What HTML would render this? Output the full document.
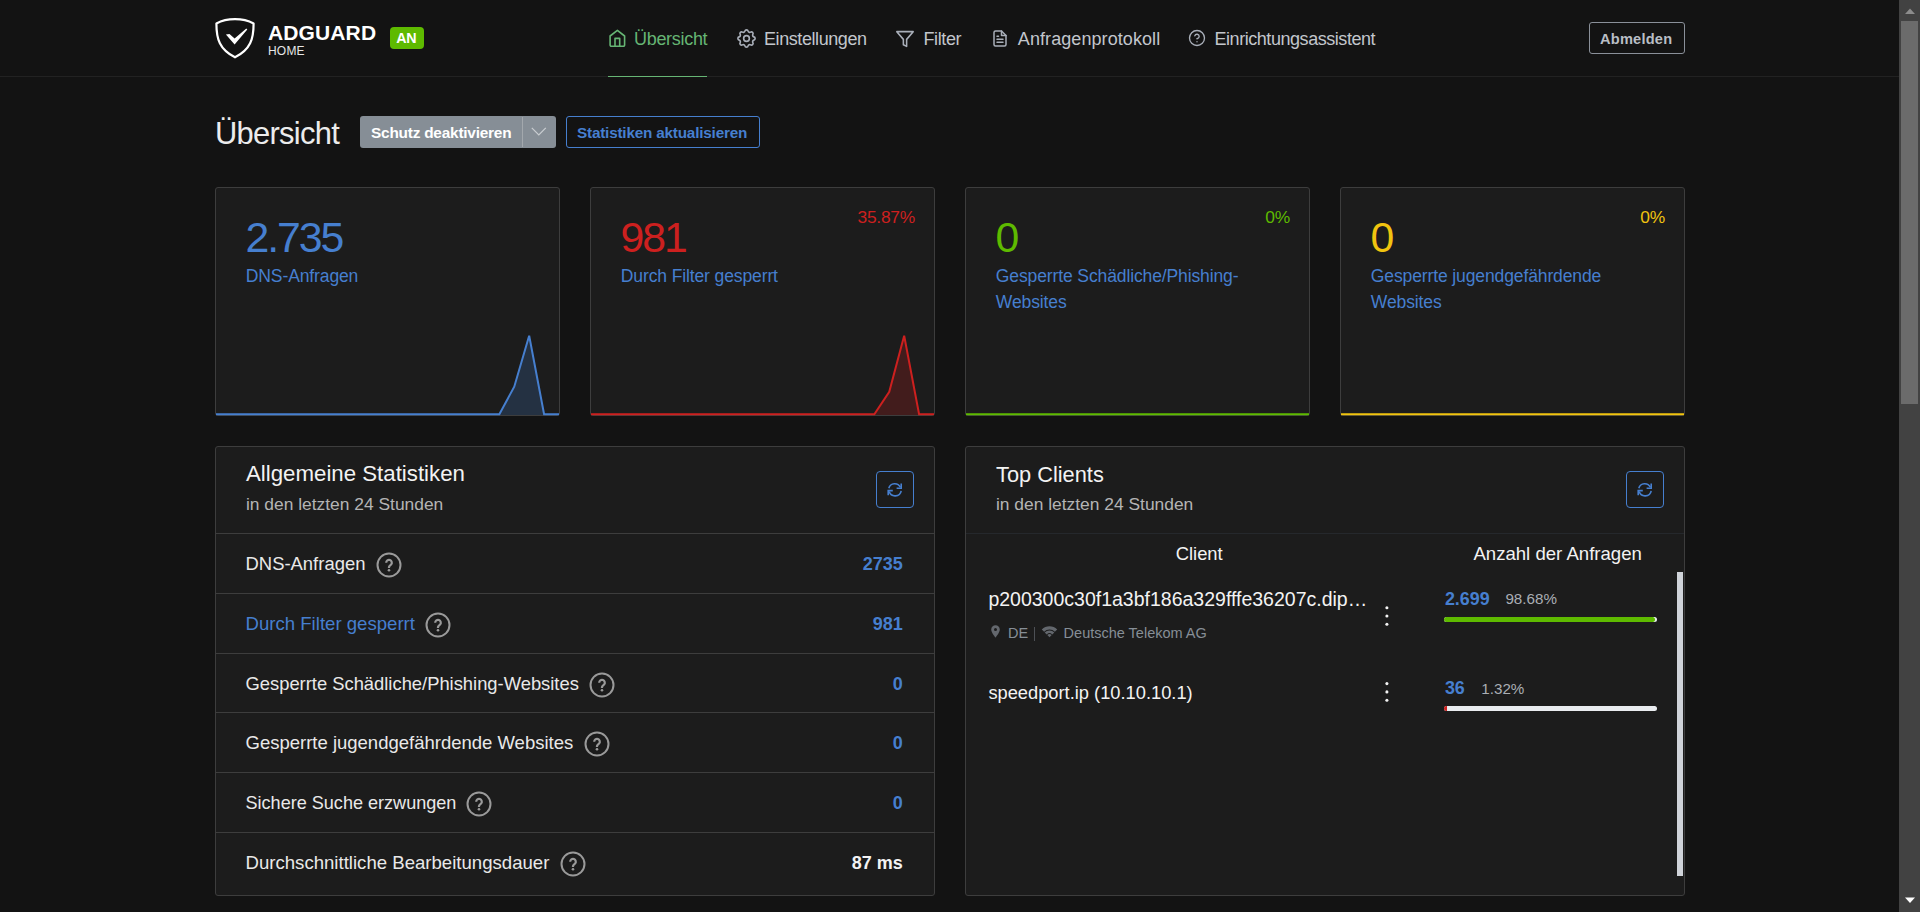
<!DOCTYPE html>
<html><head><meta charset="utf-8"><title>AdGuard Home</title>
<style>
html,body{margin:0;padding:0;width:1920px;height:912px;overflow:hidden;background:#131313;}
body{position:relative;font-family:"Liberation Sans",sans-serif;}
.t{position:absolute;white-space:nowrap;line-height:1;}
svg{display:block;overflow:visible}
</style></head><body>
<div style="position:absolute;left:0px;top:76px;width:1899px;height:1px;background:#222"></div>
<svg style="position:absolute;left:214px;top:17px;" width="42" height="42" viewBox="0 0 42 42" fill="none"><path d="M21 2.2C13.5 2.2 7 4 2.4 6.4C2.4 22 5.5 32.5 21 40.3C36.5 32.5 39.6 22 39.6 6.4C35 4 28.5 2.2 21 2.2Z" stroke="#fff" stroke-width="2.2" stroke-linejoin="round"/><path d="M11.9 17.4L15.5 17L20.6 21.6L32.3 11.4L33.3 12.4L20.6 27.4Z" fill="#fff"/></svg>
<div class="t" style="left:268px;top:21.62px;font-size:21px;color:#fff;font-weight:700;letter-spacing:0.12px;">ADGUARD</div>
<div class="t" style="left:268px;top:44.84px;font-size:12px;color:#e6e6e6;letter-spacing:0.2px;">HOME</div>
<div style="position:absolute;left:390px;top:27px;width:34px;height:22px;background:#5eba00;border-radius:4px"></div>
<div class="t" style="left:396.2px;top:31.30px;font-size:14.3px;color:#fff;font-weight:700;letter-spacing:-0.2px;">AN</div>
<svg style="position:absolute;left:604px;top:26px;" width="26" height="26" viewBox="0 0 26 26" fill="none"><g stroke="#66b574" stroke-width="1.6" stroke-linecap="round" stroke-linejoin="round"><path d="M6.1 10L13.4 4.4L20.6 10V19a1.2 1.2 0 0 1-1.2 1.2H7.3a1.2 1.2 0 0 1-1.2-1.2Z"/><path d="M11 20.2V12.4H15.7V20.2"/></g></svg>
<div class="t" style="left:634px;top:30.06px;font-size:18px;color:#66b574;letter-spacing:-0.3px;">Übersicht</div>
<div style="position:absolute;left:608px;top:76px;width:99px;height:1px;background:#66b574"></div>
<svg style="position:absolute;left:734.9px;top:26.8px;" width="23" height="23" viewBox="0 0 24 24" fill="none"><g stroke="#a9afb9" stroke-width="1.7" stroke-linecap="round" stroke-linejoin="round"><path d="M10.325 4.317c.426-1.756 2.924-1.756 3.35 0a1.724 1.724 0 0 0 2.573 1.066c1.543-.94 3.31.826 2.37 2.37a1.724 1.724 0 0 0 1.065 2.572c1.756.426 1.756 2.924 0 3.35a1.724 1.724 0 0 0-1.066 2.573c.94 1.543-.826 3.31-2.37 2.37a1.724 1.724 0 0 0-2.572 1.065c-.426 1.756-2.924 1.756-3.35 0a1.724 1.724 0 0 0-2.573-1.066c-1.543.94-3.31-.826-2.37-2.37a1.724 1.724 0 0 0-1.065-2.572c-1.756-.426-1.756-2.924 0-3.35a1.724 1.724 0 0 0 1.066-2.573c-.94-1.543.826-3.31 2.37-2.37c1 .608 2.296.07 2.572-1.065z"/><circle cx="12" cy="12" r="3"/></g></svg>
<div class="t" style="left:764px;top:30.06px;font-size:18px;color:#c2c6cc;letter-spacing:-0.42px;">Einstellungen</div>
<svg style="position:absolute;left:895px;top:29.7px;" width="20" height="18" viewBox="0 0 24 22" fill="none"><g stroke="#a9afb9" stroke-width="1.9" stroke-linecap="round" stroke-linejoin="round"><path d="M22 2H2l8 9.46V18l4 2v-8.54L22 2z"/></g></svg>
<div class="t" style="left:923.5px;top:30.06px;font-size:18px;color:#c2c6cc;letter-spacing:-0.4px;">Filter</div>
<svg style="position:absolute;left:991px;top:29px;" width="18" height="19" viewBox="0 0 24 24" fill="none"><g stroke="#a9afb9" stroke-width="2" stroke-linecap="round" stroke-linejoin="round"><path d="M14 2H6a2 2 0 0 0-2 2v16a2 2 0 0 0 2 2h12a2 2 0 0 0 2-2V8z"/><path d="M14 2v6h6"/><path d="M16 13H8M16 17H8M10 9H8"/></g></svg>
<div class="t" style="left:1017.8px;top:30.06px;font-size:18px;color:#c2c6cc;letter-spacing:0.08px;">Anfragenprotokoll</div>
<svg style="position:absolute;left:1188.2px;top:29.3px;" width="18" height="18" viewBox="0 0 24 24" fill="none"><g stroke="#a9afb9" stroke-width="1.8" stroke-linecap="round" stroke-linejoin="round"><circle cx="12" cy="12" r="10"/><path d="M9.09 9a3 3 0 0 1 5.83 1c0 2-3 3-3 3"/><path d="M12 17h.01"/></g></svg>
<div class="t" style="left:1214.5px;top:30.06px;font-size:18px;color:#c2c6cc;letter-spacing:-0.45px;">Einrichtungsassistent</div>
<div style="position:absolute;left:1589px;top:22px;width:96px;height:32px;box-sizing:border-box;border:1px solid #8a9099;border-radius:3px"></div>
<div class="t" style="left:1600px;top:31.64px;font-size:14.6px;color:#b9bec5;font-weight:700;letter-spacing:0.22px;">Abmelden</div>
<div class="t" style="left:215px;top:118.94px;font-size:30.9px;color:#ececec;letter-spacing:-0.72px;">Übersicht</div>
<div style="position:absolute;left:360px;top:116px;width:196px;height:32px;background:#868e96;border-radius:3px"></div>
<div style="position:absolute;left:522px;top:117px;width:1px;height:30px;background:#a3a8ad"></div>
<div class="t" style="left:371px;top:125.16px;font-size:15.4px;color:#fff;font-weight:700;letter-spacing:-0.22px;">Schutz deaktivieren</div>
<svg style="position:absolute;left:531px;top:127px;" width="16" height="9" viewBox="0 0 16 9" fill="none"><path d="M0.8 0.8L7.8 8L14.8 0.8" stroke="#c9cdd1" stroke-width="1.2"/></svg>
<div style="position:absolute;left:566px;top:116px;width:194px;height:32px;box-sizing:border-box;border:1.5px solid #467fcf;border-radius:3px"></div>
<div class="t" style="left:577px;top:125.25px;font-size:15.3px;color:#467fcf;font-weight:700;letter-spacing:-0.2px;">Statistiken aktualisieren</div>
<div style="position:absolute;left:215px;top:187px;width:345px;height:229px;box-sizing:border-box;background:#1c1c1c;border:1px solid #3d3d3d;border-radius:3px"></div>
<div class="t" style="left:245.5px;top:215.67px;font-size:42.8px;color:#467fcf;letter-spacing:-2.1px;">2.735</div>
<div class="t" style="left:245.8px;top:267.84px;font-size:17.55px;color:#467fcf;letter-spacing:-0.13px;">DNS-Anfragen</div>
<svg style="position:absolute;left:216px;top:187px;" width="343" height="229" viewBox="0 0 343 229" fill="none"><path d="M0.00,227.20 L14.91,227.20 L29.83,227.20 L44.74,227.20 L59.65,227.20 L74.57,227.20 L89.48,227.20 L104.39,227.20 L119.30,227.20 L134.22,227.20 L149.13,227.20 L164.04,227.20 L178.96,227.20 L193.87,227.20 L208.78,227.20 L223.70,227.20 L238.61,227.20 L253.52,227.20 L268.43,227.20 L283.35,227.20 L298.26,199.72 L313.17,148.70 L328.09,227.20 L343.00,227.20 L343,228 L0,228 Z" fill="rgba(70,127,207,0.22)"/><path d="M0.00,227.20 L14.91,227.20 L29.83,227.20 L44.74,227.20 L59.65,227.20 L74.57,227.20 L89.48,227.20 L104.39,227.20 L119.30,227.20 L134.22,227.20 L149.13,227.20 L164.04,227.20 L178.96,227.20 L193.87,227.20 L208.78,227.20 L223.70,227.20 L238.61,227.20 L253.52,227.20 L268.43,227.20 L283.35,227.20 L298.26,199.72 L313.17,148.70 L328.09,227.20 L343.00,227.20" stroke="#467fcf" stroke-width="2" stroke-linejoin="miter"/></svg>
<div style="position:absolute;left:590px;top:187px;width:345px;height:229px;box-sizing:border-box;background:#1c1c1c;border:1px solid #3d3d3d;border-radius:3px"></div>
<div class="t" style="left:620.5px;top:215.67px;font-size:42.8px;color:#cd201f;letter-spacing:-2.1px;">981</div>
<div class="t" style="left:620.8px;top:267.84px;font-size:17.55px;color:#467fcf;letter-spacing:-0.13px;">Durch Filter gesperrt</div>
<div class="t" style="right:1005px;top:208.87px;font-size:17.4px;color:#cd201f;letter-spacing:-0.25px;">35.87%</div>
<svg style="position:absolute;left:591px;top:187px;" width="343" height="229" viewBox="0 0 343 229" fill="none"><path d="M0.00,227.20 L14.91,227.20 L29.83,227.20 L44.74,227.20 L59.65,227.20 L74.57,227.20 L89.48,227.20 L104.39,227.20 L119.30,227.20 L134.22,227.20 L149.13,227.20 L164.04,227.20 L178.96,227.20 L193.87,227.20 L208.78,227.20 L223.70,227.20 L238.61,227.20 L253.52,227.20 L268.43,227.20 L283.35,227.20 L298.26,204.83 L313.17,148.70 L328.09,227.20 L343.00,227.20 L343,228 L0,228 Z" fill="rgba(205,32,31,0.22)"/><path d="M0.00,227.20 L14.91,227.20 L29.83,227.20 L44.74,227.20 L59.65,227.20 L74.57,227.20 L89.48,227.20 L104.39,227.20 L119.30,227.20 L134.22,227.20 L149.13,227.20 L164.04,227.20 L178.96,227.20 L193.87,227.20 L208.78,227.20 L223.70,227.20 L238.61,227.20 L253.52,227.20 L268.43,227.20 L283.35,227.20 L298.26,204.83 L313.17,148.70 L328.09,227.20 L343.00,227.20" stroke="#cd201f" stroke-width="2" stroke-linejoin="miter"/></svg>
<div style="position:absolute;left:965px;top:187px;width:345px;height:229px;box-sizing:border-box;background:#1c1c1c;border:1px solid #3d3d3d;border-radius:3px"></div>
<div class="t" style="left:995.5px;top:215.67px;font-size:42.8px;color:#5eba00;letter-spacing:-2.1px;">0</div>
<div class="t" style="left:995.8px;top:267.84px;font-size:17.55px;color:#467fcf;letter-spacing:-0.13px;">Gesperrte Schädliche/Phishing-</div>
<div class="t" style="left:995.8px;top:293.54px;font-size:17.55px;color:#467fcf;letter-spacing:-0.13px;">Websites</div>
<div class="t" style="right:630px;top:208.87px;font-size:17.4px;color:#5eba00;letter-spacing:-0.25px;">0%</div>
<svg style="position:absolute;left:966px;top:187px;" width="343" height="229" viewBox="0 0 343 229" fill="none"><path d="M0.00,227.20 L14.91,227.20 L29.83,227.20 L44.74,227.20 L59.65,227.20 L74.57,227.20 L89.48,227.20 L104.39,227.20 L119.30,227.20 L134.22,227.20 L149.13,227.20 L164.04,227.20 L178.96,227.20 L193.87,227.20 L208.78,227.20 L223.70,227.20 L238.61,227.20 L253.52,227.20 L268.43,227.20 L283.35,227.20 L298.26,227.20 L313.17,227.20 L328.09,227.20 L343.00,227.20" stroke="#5eba00" stroke-width="2" stroke-linejoin="miter"/></svg>
<div style="position:absolute;left:1340px;top:187px;width:345px;height:229px;box-sizing:border-box;background:#1c1c1c;border:1px solid #3d3d3d;border-radius:3px"></div>
<div class="t" style="left:1370.5px;top:215.67px;font-size:42.8px;color:#f1c40f;letter-spacing:-2.1px;">0</div>
<div class="t" style="left:1370.8px;top:267.84px;font-size:17.55px;color:#467fcf;letter-spacing:-0.13px;">Gesperrte jugendgefährdende</div>
<div class="t" style="left:1370.8px;top:293.54px;font-size:17.55px;color:#467fcf;letter-spacing:-0.13px;">Websites</div>
<div class="t" style="right:255px;top:208.87px;font-size:17.4px;color:#f1c40f;letter-spacing:-0.25px;">0%</div>
<svg style="position:absolute;left:1341px;top:187px;" width="343" height="229" viewBox="0 0 343 229" fill="none"><path d="M0.00,227.20 L14.91,227.20 L29.83,227.20 L44.74,227.20 L59.65,227.20 L74.57,227.20 L89.48,227.20 L104.39,227.20 L119.30,227.20 L134.22,227.20 L149.13,227.20 L164.04,227.20 L178.96,227.20 L193.87,227.20 L208.78,227.20 L223.70,227.20 L238.61,227.20 L253.52,227.20 L268.43,227.20 L283.35,227.20 L298.26,227.20 L313.17,227.20 L328.09,227.20 L343.00,227.20" stroke="#f1c40f" stroke-width="2" stroke-linejoin="miter"/></svg>
<div style="position:absolute;left:215px;top:446px;width:720px;height:450px;box-sizing:border-box;background:#1c1c1c;border:1px solid #3d3d3d;border-radius:3px"></div>
<div style="position:absolute;left:876px;top:471px;width:38px;height:37px;box-sizing:border-box;border:1.5px solid #467fcf;border-radius:4px"></div>
<svg style="position:absolute;left:886px;top:482px;" width="18" height="15" viewBox="0 0 18 15" fill="none"><g stroke="#467fcf" stroke-width="1.6" stroke-linecap="butt" stroke-linejoin="miter" fill="none"><path d="M2.8 6.2A6.2 6.2 0 0 1 14.3 5.2"/><path d="M15.2 1.5V6.3H10.6"/><path d="M15.2 8.8A6.2 6.2 0 0 1 3.2 9.6"/><path d="M2.2 13.2V8.6H6.8"/></g></svg>
<div class="t" style="left:246px;top:463.17px;font-size:22.25px;color:#f3f3f3;">Allgemeine Statistiken</div>
<div class="t" style="left:246px;top:495.77px;font-size:17.4px;color:#b4b4b4;">in den letzten 24 Stunden</div>
<div style="position:absolute;left:216px;top:533px;width:718px;height:1px;background:#3d3d3d"></div>
<div style="position:absolute;left:965px;top:446px;width:720px;height:450px;box-sizing:border-box;background:#1c1c1c;border:1px solid #3d3d3d;border-radius:3px"></div>
<div style="position:absolute;left:1626px;top:471px;width:38px;height:37px;box-sizing:border-box;border:1.5px solid #467fcf;border-radius:4px"></div>
<svg style="position:absolute;left:1636px;top:482px;" width="18" height="15" viewBox="0 0 18 15" fill="none"><g stroke="#467fcf" stroke-width="1.6" stroke-linecap="butt" stroke-linejoin="miter" fill="none"><path d="M2.8 6.2A6.2 6.2 0 0 1 14.3 5.2"/><path d="M15.2 1.5V6.3H10.6"/><path d="M15.2 8.8A6.2 6.2 0 0 1 3.2 9.6"/><path d="M2.2 13.2V8.6H6.8"/></g></svg>
<div class="t" style="left:996px;top:463.55px;font-size:21.8px;color:#f3f3f3;">Top Clients</div>
<div class="t" style="left:996px;top:495.77px;font-size:17.4px;color:#b4b4b4;">in den letzten 24 Stunden</div>
<div style="position:absolute;left:966px;top:533px;width:718px;height:1px;background:#25282c"></div>
<div class="t" style="left:245.5px;top:554.98px;font-size:18.45px;color:#e9e9e9;">DNS-Anfragen</div>
<div class="t" style="right:1017.3px;top:555.36px;font-size:18px;color:#467fcf;font-weight:700;">2735</div>
<svg style="position:absolute;left:375.5px;top:552.2px;" width="26" height="26" viewBox="0 0 26 26" fill="none"><circle cx="13" cy="13" r="11.5" stroke="#9a9a9a" stroke-width="2"/><path d="M10.2 10.7A2.8 2.8 0 1 1 15.1 12.5C14.2 13.3 13 13.8 13 15.1V15.9" stroke="#9a9a9a" stroke-width="2.2" stroke-linecap="butt"/><circle cx="13" cy="18.3" r="1.3" fill="#9a9a9a"/></svg>
<div style="position:absolute;left:216px;top:593px;width:718px;height:1px;background:#3d3d3d"></div>
<div class="t" style="left:245.5px;top:614.86px;font-size:18.6px;color:#467fcf;">Durch Filter gesperrt</div>
<div class="t" style="right:1017.3px;top:615.36px;font-size:18px;color:#467fcf;font-weight:700;">981</div>
<svg style="position:absolute;left:424.5px;top:612.2px;" width="26" height="26" viewBox="0 0 26 26" fill="none"><circle cx="13" cy="13" r="11.5" stroke="#9a9a9a" stroke-width="2"/><path d="M10.2 10.7A2.8 2.8 0 1 1 15.1 12.5C14.2 13.3 13 13.8 13 15.1V15.9" stroke="#9a9a9a" stroke-width="2.2" stroke-linecap="butt"/><circle cx="13" cy="18.3" r="1.3" fill="#9a9a9a"/></svg>
<div style="position:absolute;left:216px;top:653px;width:718px;height:1px;background:#3d3d3d"></div>
<div class="t" style="left:245.5px;top:675.06px;font-size:18.36px;color:#e9e9e9;">Gesperrte Schädliche/Phishing-Websites</div>
<div class="t" style="right:1017.3px;top:675.36px;font-size:18px;color:#467fcf;font-weight:700;">0</div>
<svg style="position:absolute;left:588.5px;top:672.2px;" width="26" height="26" viewBox="0 0 26 26" fill="none"><circle cx="13" cy="13" r="11.5" stroke="#9a9a9a" stroke-width="2"/><path d="M10.2 10.7A2.8 2.8 0 1 1 15.1 12.5C14.2 13.3 13 13.8 13 15.1V15.9" stroke="#9a9a9a" stroke-width="2.2" stroke-linecap="butt"/><circle cx="13" cy="18.3" r="1.3" fill="#9a9a9a"/></svg>
<div style="position:absolute;left:216px;top:712px;width:718px;height:1px;background:#3d3d3d"></div>
<div class="t" style="left:245.5px;top:733.93px;font-size:18.51px;color:#e9e9e9;">Gesperrte jugendgefährdende Websites</div>
<div class="t" style="right:1017.3px;top:734.36px;font-size:18px;color:#467fcf;font-weight:700;">0</div>
<svg style="position:absolute;left:583.5px;top:731.2px;" width="26" height="26" viewBox="0 0 26 26" fill="none"><circle cx="13" cy="13" r="11.5" stroke="#9a9a9a" stroke-width="2"/><path d="M10.2 10.7A2.8 2.8 0 1 1 15.1 12.5C14.2 13.3 13 13.8 13 15.1V15.9" stroke="#9a9a9a" stroke-width="2.2" stroke-linecap="butt"/><circle cx="13" cy="18.3" r="1.3" fill="#9a9a9a"/></svg>
<div style="position:absolute;left:216px;top:772px;width:718px;height:1px;background:#3d3d3d"></div>
<div class="t" style="left:245.5px;top:794.30px;font-size:18.07px;color:#e9e9e9;">Sichere Suche erzwungen</div>
<div class="t" style="right:1017.3px;top:794.36px;font-size:18px;color:#467fcf;font-weight:700;">0</div>
<svg style="position:absolute;left:465.5px;top:791.2px;" width="26" height="26" viewBox="0 0 26 26" fill="none"><circle cx="13" cy="13" r="11.5" stroke="#9a9a9a" stroke-width="2"/><path d="M10.2 10.7A2.8 2.8 0 1 1 15.1 12.5C14.2 13.3 13 13.8 13 15.1V15.9" stroke="#9a9a9a" stroke-width="2.2" stroke-linecap="butt"/><circle cx="13" cy="18.3" r="1.3" fill="#9a9a9a"/></svg>
<div style="position:absolute;left:216px;top:832px;width:718px;height:1px;background:#3d3d3d"></div>
<div class="t" style="left:245.5px;top:853.86px;font-size:18.6px;color:#e9e9e9;">Durchschnittliche Bearbeitungsdauer</div>
<div class="t" style="right:1017.3px;top:854.36px;font-size:18px;color:#f3f3f3;font-weight:700;">87 ms</div>
<svg style="position:absolute;left:559.5px;top:851.2px;" width="26" height="26" viewBox="0 0 26 26" fill="none"><circle cx="13" cy="13" r="11.5" stroke="#9a9a9a" stroke-width="2"/><path d="M10.2 10.7A2.8 2.8 0 1 1 15.1 12.5C14.2 13.3 13 13.8 13 15.1V15.9" stroke="#9a9a9a" stroke-width="2.2" stroke-linecap="butt"/><circle cx="13" cy="18.3" r="1.3" fill="#9a9a9a"/></svg>
<div class="t" style="left:1175.7px;top:545.42px;font-size:18.4px;color:#f3f3f3;">Client</div>
<div class="t" style="left:1473.4px;top:545.26px;font-size:18.6px;color:#f3f3f3;">Anzahl der Anfragen</div>
<div class="t" style="left:988.4px;top:590.49px;font-size:19.5px;color:#f3f3f3;">p200300c30f1a3bf186a329fffe36207c.dip…</div>
<svg style="position:absolute;left:991px;top:625px;" width="9" height="13" viewBox="0 0 9 13" fill="none"><path fill-rule="evenodd" d="M4.5 0.2C2.1 0.2 0.2 2.1 0.2 4.5C0.2 7.6 4.5 12.6 4.5 12.6S8.8 7.6 8.8 4.5C8.8 2.1 6.9 0.2 4.5 0.2ZM4.5 3A1.5 1.5 0 1 0 4.5 6A1.5 1.5 0 1 0 4.5 3Z" fill="#63676d"/></svg>
<div class="t" style="left:1008px;top:625.73px;font-size:14.5px;color:#868e96;">DE</div>
<div style="position:absolute;left:1033.5px;top:627px;width:1px;height:14px;background:#4d5055"></div>
<svg style="position:absolute;left:1041px;top:626px;" width="17" height="12" viewBox="0 0 17 12" fill="none"><path d="M8.5 11.2L6.31 9.01A3.1 3.1 0 0 1 10.69 9.01ZM3.69 6.39A6.8 6.8 0 0 1 13.31 6.39L11.26 8.44A3.9 3.9 0 0 0 5.74 8.44ZM0.79 3.49A10.9 10.9 0 0 1 16.21 3.49L13.87 5.83A7.6 7.6 0 0 0 3.13 5.83Z" fill="#63676d"/></svg>
<div class="t" style="left:1063.6px;top:625.73px;font-size:14.5px;color:#868e96;">Deutsche Telekom AG</div>
<svg style="position:absolute;left:1382px;top:602px;" width="10" height="28" viewBox="0 0 10 28" fill="none"><circle cx="4.9" cy="5.7999999999999545" r="1.55" fill="#f3f3f3"/><circle cx="4.9" cy="14.0" r="1.55" fill="#f3f3f3"/><circle cx="4.9" cy="22.200000000000045" r="1.55" fill="#f3f3f3"/></svg>
<div class="t" style="left:1444.9px;top:591.05px;font-size:17.9px;color:#467fcf;font-weight:700;">2.699</div>
<div class="t" style="left:1505.4px;top:591.43px;font-size:15.2px;color:#aaaeb4;">98.68%</div>
<div style="position:absolute;left:1444px;top:617px;width:213px;height:5px;background:#e9ecef;border-radius:3px"></div>
<div style="position:absolute;left:1444px;top:617px;width:211px;height:5px;background:#5eba00;border-radius:3px"></div>
<div class="t" style="left:988.4px;top:683.81px;font-size:18.3px;color:#f3f3f3;">speedport.ip (10.10.10.1)</div>
<svg style="position:absolute;left:1382px;top:678px;" width="10" height="28" viewBox="0 0 10 28" fill="none"><circle cx="4.9" cy="5.600000000000023" r="1.55" fill="#f3f3f3"/><circle cx="4.9" cy="13.899999999999977" r="1.55" fill="#f3f3f3"/><circle cx="4.9" cy="22.200000000000045" r="1.55" fill="#f3f3f3"/></svg>
<div class="t" style="left:1444.9px;top:679.85px;font-size:17.9px;color:#467fcf;font-weight:700;">36</div>
<div class="t" style="left:1481.3px;top:680.93px;font-size:15.2px;color:#aaaeb4;">1.32%</div>
<div style="position:absolute;left:1444px;top:706px;width:213px;height:5px;background:#e9ecef;border-radius:3px"></div>
<div style="position:absolute;left:1444px;top:706px;width:3px;height:5px;background:#cd201f;border-radius:3px 0 0 3px"></div>
<div style="position:absolute;left:1677px;top:572px;width:6px;height:304px;background:#cfd3d9"></div>
<div style="position:absolute;left:1899px;top:0px;width:21px;height:912px;background:#424242"></div>
<div style="position:absolute;left:1901px;top:21px;width:17px;height:383px;background:#6b6b6b"></div>
<svg style="position:absolute;left:1903px;top:7px;" width="14" height="8" viewBox="0 0 14 8" fill="none"><path d="M2 7L7 1.5L12 7Z" fill="#8c8c8c"/></svg>
<svg style="position:absolute;left:1903px;top:896px;" width="14" height="8" viewBox="0 0 14 8" fill="none"><path d="M2 1.5L7 7L12 1.5Z" fill="#ffffff"/></svg>
</body></html>
